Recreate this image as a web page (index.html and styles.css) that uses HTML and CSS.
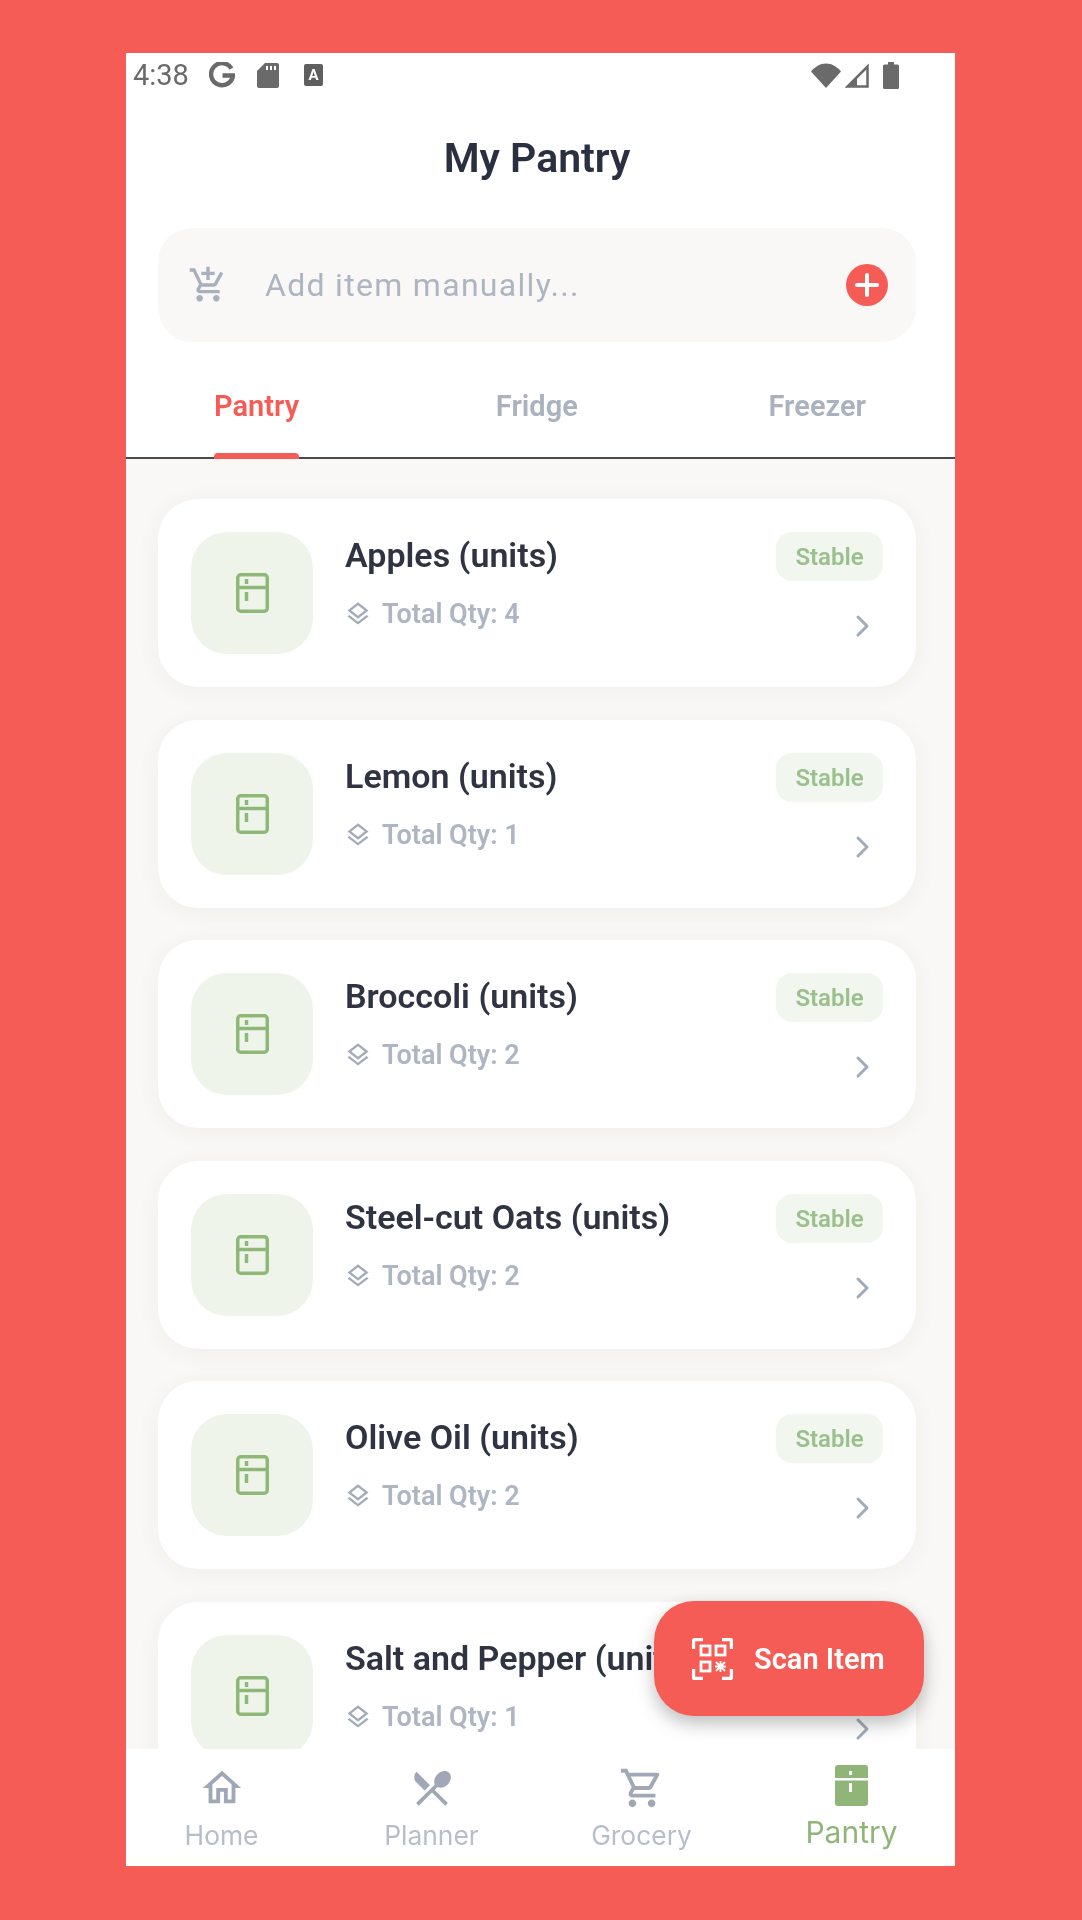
FILE: index.html
```html
<!DOCTYPE html>
<html lang="en">
<head>
<meta charset="utf-8">
<title>My Pantry</title>
<link rel="stylesheet" href="styles.css">
</head>
<body>
<svg class="defs" width="0" height="0" aria-hidden="true">
  <symbol id="fridge" viewBox="0 0 33 40">
    <rect x="1.750" y="1.750" width="29.500" height="36.500" rx="3" fill="none" stroke="currentColor" stroke-width="3.500"/>
    <path d="M1.500 14.500h30M10.500 6v5M10.500 19v9" fill="none" stroke="currentColor" stroke-width="3.500"/>
  </symbol>
  <symbol id="layers" viewBox="0 0 24 24">
    <path d="M11.99 18.54l-7.37-5.73L3 14.07l9 7 9-7-1.63-1.27-7.38 5.74zM12 16l7.36-5.73L21 9l-9-7-9 7 1.63 1.27L12 16zm0-11.47L17.74 9 12 13.47 6.26 9 12 4.53z" fill="currentColor"/>
  </symbol>
  <symbol id="chevron" viewBox="0 0 40 40">
    <path d="M15 11l9 9-9 9" fill="none" stroke="currentColor" stroke-width="3" stroke-linecap="round" stroke-linejoin="round"/>
  </symbol>
</svg>
<main class="phone">
  <div class="status">
    <span class="time">4:38</span>
    <svg class="st-g" viewBox="0 0 26 26"><path d="M22.500 6.500A11 11 0 1 0 24 13.500H13.500" fill="none" stroke="currentColor" stroke-width="4.400"/></svg>
    <svg class="st-sd" viewBox="0 0 22 25"><path d="M8 0h12a2 2 0 0 1 2 2v21a2 2 0 0 1-2 2H2a2 2 0 0 1-2-2V8z" fill="currentColor"/><path d="M9 3h2v4H9zM13 3h2v4h-2zM17 3h2v4h-2z" fill="#fff"/></svg>
    <span class="st-a">A</span>
    <span class="st-right">
      <svg class="st-wifi" viewBox="0 0 30 25"><path d="M15 25L0 8.500C4 4 9 .5 15 .5S26 4 30 8.500z" fill="currentColor"/></svg>
      <svg class="st-signal" viewBox="0 0 24 25"><path d="M22.500 3.500v20H2.500z" fill="none" stroke="currentColor" stroke-width="2.500"/><path d="M12 14.500v9H2.500L12 14.500z" fill="currentColor"/></svg>
      <svg class="st-batt" viewBox="0 0 16 27"><path d="M5 0h6v2.500h3.500a1.500 1.500 0 0 1 1.500 1.500V25.500a1.500 1.500 0 0 1-1.500 1.500H1.500A1.500 1.500 0 0 1 0 25.500V4a1.500 1.500 0 0 1 1.500-1.500H5z" fill="currentColor"/></svg>
    </span>
  </div>

  <h1 class="title">My Pantry</h1>

  <div class="search">
    <svg class="search-cart" viewBox="0 0 24 24"><path d="M11 9h2V6h3V4h-3V1h-2v3H8v2h3v3zm-4 9c-1.100 0-1.990.9-1.990 2S5.900 22 7 22s2-.9 2-2-.9-2-2-2zm10 0c-1.100 0-1.990.9-1.990 2s.89 2 1.990 2 2-.9 2-2-.9-2-2-2zm-9.830-3.250l.03-.12.9-1.630h7.450c.75 0 1.410-.41 1.750-1.030l3.860-7.010L19.420 4h-.01l-1.100 2-2.760 5H8.530l-.13-.27L6.160 6l-.95-2-.94-2H1v2h2l3.600 7.590-1.350 2.450c-.16.28-.25.61-.25.96 0 1.100.9 2 2 2h12v-2H7.420c-.13 0-.25-.11-.25-.25z" fill="currentColor"/></svg>
    <span class="search-text">Add item manually...</span>
    <svg class="search-add" viewBox="0 0 42 42"><circle cx="21" cy="21" r="21" fill="#f65c56"/><path d="M21 11v20M11 21h20" stroke="#fff" stroke-width="4" stroke-linecap="round"/></svg>
  </div>

  <nav class="tabs">
    <span class="tab tab-active">Pantry</span>
    <span class="tab tab-middle">Fridge</span>
    <span class="tab">Freezer</span>
  </nav>

  <section class="list">
    <article class="card">
      <div class="thumb"><svg class="thumb-icon"><use href="#fridge"/></svg></div>
      <div class="info">
        <h2 class="name">Apples (units)</h2>
        <p class="qty"><svg class="qty-icon"><use href="#layers"/></svg>Total Qty: 4</p>
      </div>
      <div class="side"><span class="badge">Stable</span><svg class="chev"><use href="#chevron"/></svg></div>
    </article>
    <article class="card">
      <div class="thumb"><svg class="thumb-icon"><use href="#fridge"/></svg></div>
      <div class="info">
        <h2 class="name">Lemon (units)</h2>
        <p class="qty"><svg class="qty-icon"><use href="#layers"/></svg>Total Qty: 1</p>
      </div>
      <div class="side"><span class="badge">Stable</span><svg class="chev"><use href="#chevron"/></svg></div>
    </article>
    <article class="card">
      <div class="thumb"><svg class="thumb-icon"><use href="#fridge"/></svg></div>
      <div class="info">
        <h2 class="name">Broccoli (units)</h2>
        <p class="qty"><svg class="qty-icon"><use href="#layers"/></svg>Total Qty: 2</p>
      </div>
      <div class="side"><span class="badge">Stable</span><svg class="chev"><use href="#chevron"/></svg></div>
    </article>
    <article class="card">
      <div class="thumb"><svg class="thumb-icon"><use href="#fridge"/></svg></div>
      <div class="info">
        <h2 class="name">Steel-cut Oats (units)</h2>
        <p class="qty"><svg class="qty-icon"><use href="#layers"/></svg>Total Qty: 2</p>
      </div>
      <div class="side"><span class="badge">Stable</span><svg class="chev"><use href="#chevron"/></svg></div>
    </article>
    <article class="card">
      <div class="thumb"><svg class="thumb-icon"><use href="#fridge"/></svg></div>
      <div class="info">
        <h2 class="name">Olive Oil (units)</h2>
        <p class="qty"><svg class="qty-icon"><use href="#layers"/></svg>Total Qty: 2</p>
      </div>
      <div class="side"><span class="badge">Stable</span><svg class="chev"><use href="#chevron"/></svg></div>
    </article>
    <article class="card">
      <div class="thumb"><svg class="thumb-icon"><use href="#fridge"/></svg></div>
      <div class="info">
        <h2 class="name">Salt and Pepper (units)</h2>
        <p class="qty"><svg class="qty-icon"><use href="#layers"/></svg>Total Qty: 1</p>
      </div>
      <div class="side"><span class="badge">Stable</span><svg class="chev"><use href="#chevron"/></svg></div>
    </article>
  </section>

  <button class="fab" type="button">
    <svg class="fab-icon" viewBox="0 0 41 42" fill="none" stroke="#fff">
      <path d="M1.500 11V3a1.500 1.500 0 0 1 1.500-1.500h8M30 1.500h8a1.500 1.500 0 0 1 1.500 1.500v8M1.500 31v8a1.500 1.500 0 0 0 1.500 1.500h8M30 40.500h8a1.500 1.500 0 0 0 1.500-1.500v-8" stroke-width="3.400"/>
      <rect x="9" y="8" width="9" height="9" stroke-width="2.800"/>
      <rect x="24" y="8" width="9" height="9" stroke-width="2.800"/>
      <rect x="9" y="24" width="9" height="9" stroke-width="2.800"/>
      <path d="M24 24l9 9M33 24l-9 9M28.500 23v11M23 28.500h11" stroke-width="1.800"/>
    </svg>
    <span>Scan Item</span>
  </button>

  <footer class="nav">
    <div class="nav-item">
      <svg class="nav-icon" viewBox="0 0 24 24"><path d="M12 5.690l5 4.500V18h-2v-6H9v6H7v-7.810l5-4.500M12 3L2 12h3v8h6v-6h2v6h6v-8h3L12 3z" fill="currentColor"/></svg>
      <span class="nav-label">Home</span>
    </div>
    <div class="nav-item">
      <svg class="nav-icon" viewBox="0 0 24 24"><path d="M8.100 13.340l2.830-2.830L3.910 3.500c-1.560 1.560-1.560 4.090 0 5.660l4.190 4.180zm6.780-1.810c1.530.71 3.680.21 5.270-1.380 1.910-1.910 2.280-4.650.81-6.120-1.460-1.460-4.200-1.100-6.120.81-1.590 1.590-2.090 3.740-1.380 5.270L3.700 19.870l1.410 1.410L12 14.410l6.880 6.880 1.410-1.410L13.410 13l1.470-1.470z" fill="currentColor"/></svg>
      <span class="nav-label">Planner</span>
    </div>
    <div class="nav-item">
      <svg class="nav-icon" viewBox="0 0 24 24"><path d="M15.550 13c.75 0 1.410-.41 1.750-1.030l3.580-6.490c.37-.66-.11-1.480-.87-1.480H5.210l-.94-2H1v2h2l3.600 7.590-1.350 2.440C4.520 15.370 5.480 17 7 17h12v-2H7l1.100-2h7.450zM6.160 6h12.150l-2.760 5H8.530L6.160 6zM7 18c-1.100 0-1.990.9-1.990 2S5.900 22 7 22s2-.9 2-2-.9-2-2-2zm10 0c-1.100 0-1.990.9-1.990 2s.89 2 1.990 2 2-.9 2-2-.9-2-2-2z" fill="currentColor"/></svg>
      <span class="nav-label">Grocery</span>
    </div>
    <div class="nav-item nav-item-active">
      <svg class="nav-icon" viewBox="0 0 33 41"><path d="M3 0h27a3 3 0 0 1 3 3v10H0V3a3 3 0 0 1 3-3zM0 15.500h33V38a3 3 0 0 1-3 3H3a3 3 0 0 1-3-3z" fill="currentColor"/><path d="M14 6h3v4h-3zM14 18h3v9h-3z" fill="#fff"/></svg>
      <span class="nav-label">Pantry</span>
    </div>
  </footer>
</main>
</body>
</html>
```

FILE: styles.css
```css
* { box-sizing: border-box; }

html, body { margin: 0; height: 100%; }

body {
  background: #f65c56;
  padding: 53px 127px 0 126px;
  font-family: Roboto, "Liberation Sans", sans-serif;
}

.defs { display: block; height: 0; }

.phone {
  position: relative;
  display: flex;
  flex-direction: column;
  height: 1813px;
  background: #fff;
  overflow: hidden;
  filter: blur(0.7px);
}

/* status bar */
.status {
  display: flex;
  align-items: center;
  height: 44px;
  padding: 0 56px 0 7px;
  color: #6a6a6a;
  flex: none;
}
.time { font-size: 29px; line-height: 44px; width: 76px; }
.st-g { width: 26px; height: 26px; }
.st-sd { width: 22px; height: 25px; margin-left: 22px; }
.st-a {
  width: 19px;
  height: 22px;
  margin-left: 25px;
  background: #5f5f5f;
  color: #fff;
  border-radius: 2px;
  font-size: 15px;
  font-weight: 700;
  line-height: 22px;
  text-align: center;
}
.st-right { display: flex; align-items: center; margin-left: auto; }
.st-wifi { width: 30px; height: 25px; }
.st-signal { width: 24px; height: 25px; margin-left: 4px; }
.st-batt { width: 16px; height: 27px; margin-left: 14px; }

/* header */
.title {
  flex: none;
  margin: 0;
  padding: 38px 7px 47px 0;
  font-size: 41px;
  line-height: 46px;
  font-weight: 600;
  color: #2b3040;
  text-align: center;
}

/* search */
.search {
  flex: none;
  display: flex;
  align-items: center;
  height: 114px;
  margin: 0 39px 0 32px;
  padding: 0 28px 0 30px;
  background: #f9f8f6;
  border-radius: 34px;
}
.search-cart { width: 40px; height: 40px; color: #a8b0bf; }
.search-text {
  flex: 1;
  margin-left: 37px;
  font-size: 32px;
  letter-spacing: 1.3px;
  color: #aeb5c2;
}
.search-add { width: 42px; height: 42px; }

/* tabs */
.tabs {
  flex: none;
  display: flex;
  justify-content: space-between;
  height: 117px;
  padding: 0 89px 0 88px;
  border-bottom: 2px solid #4a4a4a;
}
.tab {
  position: relative;
  height: 115px;
  padding-top: 48px;
  font-size: 29px;
  line-height: 32px;
  font-weight: 600;
  color: #aab1bf;
}
.tab-middle { margin-left: 6px; }
.tab-active { color: #f65c56; }
.tab-active::after {
  content: "";
  position: absolute;
  left: 0;
  right: 0;
  bottom: -2px;
  height: 6px;
  background: #f65c56;
  border-radius: 4px 4px 0 0;
}

/* list */
.list {
  flex: 1;
  min-height: 0;
  display: flex;
  flex-direction: column;
  gap: 32.5px;
  padding: 40px 39px 0 32px;
  background: #f9f8f6;
  overflow: hidden;
}
.card {
  flex: none;
  display: flex;
  height: 188px;
  padding: 33px;
  background: #fff;
  border-radius: 40px;
  box-shadow: 0 4px 24px rgba(60, 50, 40, 0.05);
}
.thumb {
  flex: none;
  display: flex;
  align-items: center;
  justify-content: center;
  width: 122px;
  height: 122px;
  background: #eef4ea;
  border-radius: 36px;
}
.thumb-icon { width: 33px; height: 40px; color: #8fb878; }
.info { flex: 1; min-width: 0; margin-left: 32px; padding-top: 5px; }
.name {
  margin: 0;
  font-size: 34px;
  line-height: 36px;
  font-weight: 600;
  color: #2f3342;
  white-space: nowrap;
}
.qty {
  display: flex;
  align-items: center;
  margin: 25px 0 0;
  font-size: 27px;
  line-height: 32px;
  font-weight: 600;
  color: #aeb5c3;
}
.qty-icon { width: 28px; height: 28px; margin-right: 10px; margin-left: -1px; color: #a3abb9; }
.side {
  flex: none;
  display: flex;
  flex-direction: column;
  align-items: flex-end;
  gap: 25px;
}
.badge {
  width: 107px;
  height: 49px;
  background: #f1f6ee;
  border-radius: 16px;
  font-size: 24px;
  line-height: 50px;
  font-weight: 600;
  color: #9cc08d;
  text-align: center;
}
.chev { width: 40px; height: 40px; color: #a3abbb; }

/* floating button */
.fab {
  position: absolute;
  right: 31px;
  bottom: 150px;
  display: flex;
  align-items: center;
  gap: 21px;
  width: 270px;
  height: 115px;
  padding: 0 0 0 38px;
  border: 0;
  border-radius: 40px;
  background: #f65c56;
  color: #fff;
  font-family: inherit;
  font-size: 29px;
  font-weight: 600;
  box-shadow: 0 8px 18px rgba(0, 0, 0, 0.25);
}
.fab-icon { width: 41px; height: 42px; flex: none; }

/* bottom navigation */
.nav {
  flex: none;
  display: grid;
  grid-template-columns: repeat(4, 175px);
  column-gap: 35px;
  height: 117px;
  padding: 16px 0 0 8px;
  background: #fff;
}
.nav-item {
  display: flex;
  flex-direction: column;
  align-items: center;
  color: #a0a8b7;
}
.nav-icon { width: 46px; height: 46px; }
.nav-label {
  margin-top: 9px;
  font-family: Inter, sans-serif;
  font-size: 26.4px;
  line-height: 30px;
  color: #b7bdc9;
}
.nav-item-active { color: #8fb678; }
.nav-item-active .nav-icon { width: 33px; height: 41px; }
.nav-item-active .nav-label { margin-top: 9px; font-size: 30px; line-height: 34px; color: #8fb678; }
```
